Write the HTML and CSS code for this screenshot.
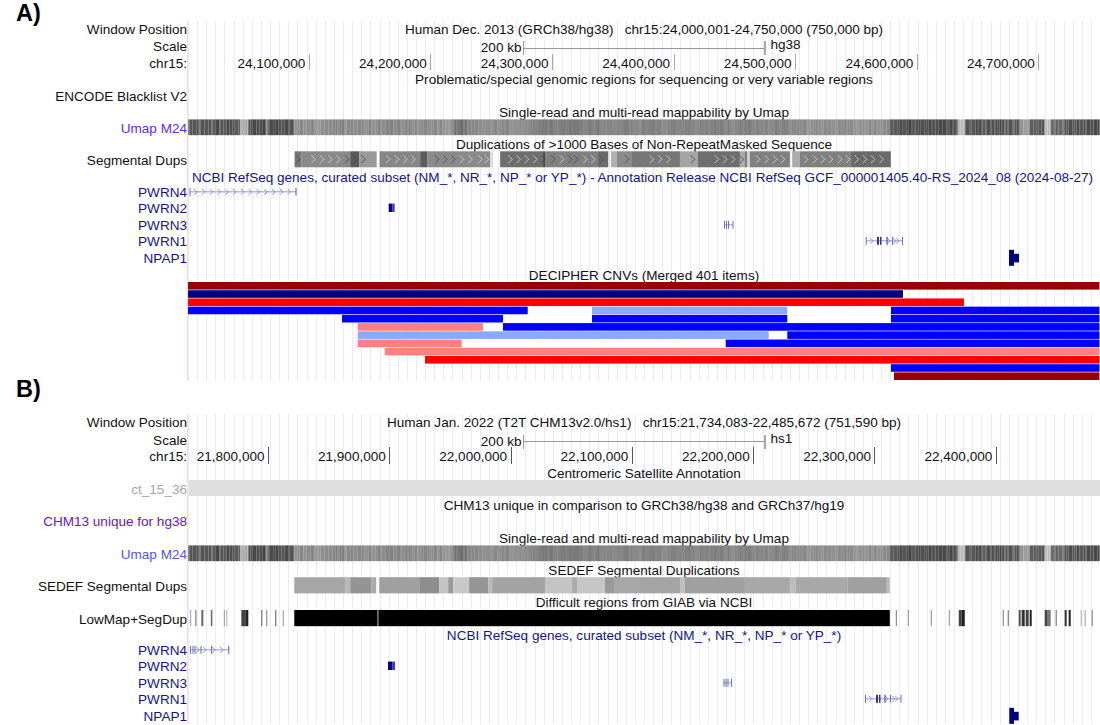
FILE: index.html
```html
<!DOCTYPE html>
<html lang="en">
<head>
<meta charset="utf-8">
<title>UCSC Genome Browser comparison</title>
<link rel="stylesheet" href="styles.css">
</head>
<body>
<main class="figure">
  <h2 class="panel-heading heading-a">A)</h2>
  <section class="browser">
    <div class="row head"><div class="label">Window Position</div><div class="track center pos">Human Dec. 2013 (GRCh38/hg38)   chr15:24,000,001-24,750,000 (750,000 bp)</div></div>
    <div class="row head"><div class="label">Scale</div><div class="track scale"><span class="scale-left">200 kb</span><span class="scale-bar"></span><span class="scale-right">hg38</span></div></div>
    <div class="row head"><div class="label">chr15:</div><div class="track ruler ruler-a">
      <span class="mark">24,100,000</span><span class="mark">24,200,000</span><span class="mark">24,300,000</span><span class="mark">24,400,000</span><span class="mark">24,500,000</span><span class="mark">24,600,000</span><span class="mark">24,700,000</span>
    </div></div>
    <div class="row"><div class="label"></div><div class="track center">Problematic/special genomic regions for sequencing or very variable regions</div></div>
    <div class="row"><div class="label">ENCODE Blacklist V2</div><div class="track"></div></div>
    <div class="row"><div class="label"></div><div class="track center">Single-read and multi-read mappability by Umap</div></div>
    <div class="row"><div class="label umap-a">Umap M24</div><div class="track" data-draw="umap"></div></div>
    <div class="row"><div class="label"></div><div class="track center">Duplications of &gt;1000 Bases of Non-RepeatMasked Sequence</div></div>
    <div class="row"><div class="label">Segmental Dups</div><div class="track" data-draw="segdups"></div></div>
    <div class="row"><div class="label"></div><div class="track center navy refseq">NCBI RefSeq genes, curated subset (NM_*, NR_*, NP_* or YP_*) - Annotation Release NCBI RefSeq GCF_000001405.40-RS_2024_08 (2024-08-27)</div></div>
    <div class="row gene"><div class="label navy">PWRN4</div><div class="track" data-draw="a-pwrn4"></div></div>
    <div class="row gene"><div class="label navy">PWRN2</div><div class="track" data-draw="a-pwrn2"></div></div>
    <div class="row gene"><div class="label navy">PWRN3</div><div class="track" data-draw="a-pwrn3"></div></div>
    <div class="row gene"><div class="label navy">PWRN1</div><div class="track" data-draw="a-pwrn1"></div></div>
    <div class="row gene"><div class="label navy">NPAP1</div><div class="track" data-draw="a-npap1"></div></div>
    <div class="row"><div class="label"></div><div class="track center">DECIPHER CNVs (Merged 401 items)</div></div>
    <div class="row decipher"><div class="label"></div><div class="track" data-draw="decipher"></div></div>
  </section>

  <h2 class="panel-heading heading-b">B)</h2>
  <section class="browser">
    <div class="row head"><div class="label">Window Position</div><div class="track center pos">Human Jan. 2022 (T2T CHM13v2.0/hs1)   chr15:21,734,083-22,485,672 (751,590 bp)</div></div>
    <div class="row head"><div class="label">Scale</div><div class="track scale"><span class="scale-left">200 kb</span><span class="scale-bar"></span><span class="scale-right">hs1</span></div></div>
    <div class="row head"><div class="label">chr15:</div><div class="track ruler ruler-b">
      <span class="mark">21,800,000</span><span class="mark">21,900,000</span><span class="mark">22,000,000</span><span class="mark">22,100,000</span><span class="mark">22,200,000</span><span class="mark">22,300,000</span><span class="mark">22,400,000</span>
    </div></div>
    <div class="row"><div class="label"></div><div class="track center">Centromeric Satellite Annotation</div></div>
    <div class="row"><div class="label muted">ct_15_36</div><div class="track"><div class="satellite"></div></div></div>
    <div class="row"><div class="label"></div><div class="track center">CHM13 unique in comparison to GRCh38/hg38 and GRCh37/hg19</div></div>
    <div class="row"><div class="label violet">CHM13 unique for hg38</div><div class="track"></div></div>
    <div class="row"><div class="label"></div><div class="track center">Single-read and multi-read mappability by Umap</div></div>
    <div class="row"><div class="label umap-b">Umap M24</div><div class="track" data-draw="umap"></div></div>
    <div class="row"><div class="label"></div><div class="track center">SEDEF Segmental Duplications</div></div>
    <div class="row"><div class="label">SEDEF Segmental Dups</div><div class="track" data-draw="sedef"></div></div>
    <div class="row"><div class="label"></div><div class="track center">Difficult regions from GIAB via NCBI</div></div>
    <div class="row"><div class="label">LowMap+SegDup</div><div class="track" data-draw="lowmap"></div></div>
    <div class="row"><div class="label"></div><div class="track center navy">NCBI RefSeq genes, curated subset (NM_*, NR_*, NP_* or YP_*)</div></div>
    <div class="row gene"><div class="label navy">PWRN4</div><div class="track" data-draw="b-pwrn4"></div></div>
    <div class="row gene"><div class="label navy">PWRN2</div><div class="track" data-draw="b-pwrn2"></div></div>
    <div class="row gene"><div class="label navy">PWRN3</div><div class="track" data-draw="b-pwrn3"></div></div>
    <div class="row gene"><div class="label navy">PWRN1</div><div class="track" data-draw="b-pwrn1"></div></div>
    <div class="row gene"><div class="label navy">NPAP1</div><div class="track" data-draw="b-npap1"></div></div>
  </section>
</main>
<script src="tracks.js"></script>
</body>
</html>
```
FILE: styles.css
```css
* { box-sizing: border-box; }
html, body { margin: 0; padding: 0; background: #fff; }
body {
  width: 1100px;
  height: 725px;
  overflow: hidden;
  font-family: "Liberation Sans", Arial, sans-serif;
  font-size: 13.55px;
  color: #111;
}
.panel-heading {
  margin: 0;
  padding-left: 16px;
  font-size: 23.5px;
  font-weight: 700;
  color: #000;
}
.heading-a { height: 21px; line-height: 27px; }
.heading-b { height: 33.9px; line-height: 17px; }
.browser {
  background-image:
    linear-gradient(#ffd9d9, #ffd9d9),
    repeating-linear-gradient(90deg, #e9e9ff 0 1px, transparent 1px 9.12px);
  background-repeat: no-repeat;
  background-position: 187px 0, 188px 0;
  background-size: 1px 100%, 912px 100%;
}
.row {
  display: grid;
  grid-template-columns: 188px 912px;
  height: 16.2px;
  line-height: 20px;
  white-space: nowrap;
}
.row.head { height: 16.47px; line-height: 18.5px; }
.row.head + .row.head { line-height: 20px; }
.row.gene { height: 16.5px; line-height: 18.5px; }
.row.decipher { height: 98.2px; }
.label { text-align: right; padding-right: 1px; }
.track { min-width: 0; }
.track svg { display: block; overflow: visible; filter: blur(0.3px); }
.center { text-align: center; }
.pos { white-space: pre; }
.refseq { padding-right: 3px; }
.navy { color: #14148a; }
.muted { color: #a8a8a8; }
.violet { color: #6a12d8; }
.umap-a { color: #5a2cf5; }
.umap-b { color: #5252f5; }
.satellite { height: 16.2px; margin-left: 1px; background: #dedede; }
.scale {
  display: grid;
  grid-template-columns: 1fr 243px 1fr;
  align-items: center;
  padding-top: 1px;
}
.scale-left { text-align: right; padding-right: 1px; }
.scale-right { padding-left: 5px; position: relative; top: -3px; }
.scale-bar {
  height: 14px;
  border-left: 1px solid #999;
  border-right: 2px solid #aaa;
  background: linear-gradient(#999, #999) 0 50% / 100% 1px no-repeat;
}
.ruler { display: flex; }
.mark {
  flex: none;
  height: 16.47px;
  text-align: right;
  padding-right: 3.5px;
  border-right: 1px solid #aaa;
}
.ruler-a { padding-left: 0.2px; }
.ruler-a .mark { width: 121.6px; }
.ruler-b .mark { width: 121.3px; border-right-color: #555; }
.ruler-b .mark:first-child { width: 81px; }
```
FILE: tracks.js
```js
var NS = "http://www.w3.org/2000/svg";
var RED = "#960000", NAVY = "#000080", BRIGHT = "#ff0000", BLUE = "#0000ff", SKY = "#88aaff", PINK = "#ff8080";

function svg(h) {
  var s = document.createElementNS(NS, "svg");
  s.setAttribute("width", 912);
  s.setAttribute("height", h);
  s.setAttribute("viewBox", "188 0 912 " + h);
  return s;
}
function rect(s, x0, x1, y, h, fill) {
  var r = document.createElementNS(NS, "rect");
  r.setAttribute("x", x0);
  r.setAttribute("y", y);
  r.setAttribute("width", x1 - x0);
  r.setAttribute("height", h);
  r.setAttribute("fill", fill);
  s.appendChild(r);
}
function chevron(s, x, c, w, h, stroke, sw) {
  var p = document.createElementNS(NS, "polyline");
  p.setAttribute("points", (x - w) + "," + (c - h) + " " + x + "," + c + " " + (x - w) + "," + (c + h));
  p.setAttribute("fill", "none");
  p.setAttribute("stroke", stroke);
  p.setAttribute("stroke-width", sw);
  s.appendChild(p);
}
function grey(v) {
  v = Math.max(0, Math.min(255, Math.round(v)));
  return "rgb(" + v + "," + v + "," + v + ")";
}

/* Umap: mean grey per stretch of the window, with column noise */
var UMAP = [
  [188, 240, 84, 26], [240, 248, 170, 24], [248, 266, 72, 24], [266, 268, 130, 10], [268, 294, 74, 24],
  [294, 335, 142, 18], [335, 345, 132, 18], [345, 380, 140, 18], [380, 420, 136, 18], [420, 453, 142, 18],
  [453, 467, 112, 10], [467, 490, 140, 18], [490, 530, 140, 16], [530, 600, 126, 16], [600, 700, 134, 16],
  [700, 800, 132, 16], [800, 890, 142, 18], [890, 958, 80, 26], [958, 965, 190, 14], [965, 1020, 84, 26],
  [1020, 1030, 150, 16], [1030, 1045, 84, 24], [1045, 1051, 185, 10], [1051, 1065, 100, 24], [1065, 1100, 78, 24]
];
function umap() {
  var s = svg(16.2), seed = 71;
  function rnd() { seed = (seed * 16807) % 2147483647; return seed / 2147483647; }
  UMAP.forEach(function (z) {
    var x = z[0];
    while (x < z[1]) {
      var w = Math.min(1 + Math.floor(rnd() * 4), z[1] - x);
      rect(s, x, x + w, 0.4, 15.8, grey(z[2] + (rnd() - 0.5) * z[3]));
      x += w;
    }
  });
  return s;
}

var SEG = [
  [294.3, 301, "#777"], [301, 350, "#8a8a8a"], [350, 359, "#595959"], [359, 376.5, "#999"],
  [379.3, 420, "#868686"], [420, 427, "#5c5c5c"], [427, 490, "#8a8a8a"], [490, 493, "#ddd"],
  [500, 543, "#6e6e6e"], [543, 545, "#4a4a4a"], [545, 598, "#808080"], [598, 608, "#6a6a6a"], [608, 610, "#ddd"],
  [611, 617, "#b0b0b0"], [617, 632, "#8a8a8a"], [632, 680, "#787878"], [680, 698, "#a4a4a4"],
  [698, 740, "#6e6e6e"], [740, 745, "#aaa"], [745, 747, "#777"], [747, 750, "#ccc"], [750, 790, "#808080"],
  [792.3, 800, "#aaa"], [800, 851, "#808080"], [851, 891, "#6a6a6a"]
];
var CHEV_LIGHT = [313, 321.7, 330, 338, 388, 396.7, 405, 413, 461.7, 470, 480, 486.7, 510, 518.3, 526.7, 535,
  561.7, 585, 593, 651.7, 660, 668.3, 716.7, 725, 733, 758, 766.7, 775, 783, 806, 815, 823, 831, 840, 848, 856.7, 865, 873, 881.7];
var CHEV_DARK = [297.7, 346.7, 355, 363, 436.7, 445, 453, 543.3, 553, 570, 576, 601.7, 626.7, 692.7, 741.7];
function segdups() {
  var s = svg(16.2);
  SEG.forEach(function (b) { rect(s, b[0], b[1], 0.3, 16, b[2]); });
  CHEV_LIGHT.forEach(function (x) { chevron(s, x + 2, 8.3, 4, 4, "#d8d8d8", 0.8); });
  CHEV_DARK.forEach(function (x) { chevron(s, x + 2, 8.3, 4, 4, "#444", 0.8); });
  return s;
}

var SEDEF = [
  [294, 345, "#a6a6a6"], [345, 350, "#b8b8b8"], [350, 371, "#949494"], [371, 376, "#aaa"],
  [379, 419, "#a0a0a0"], [419, 439, "#8e8e8e"], [439, 448, "#c4c4c4"], [448, 453, "#999"], [453, 469, "#c8c8c8"],
  [469, 488, "#959595"], [488, 492, "#bbb"], [492, 545, "#a3a3a3"], [545, 572, "#c4c4c4"], [572, 577, "#aaa"],
  [577, 605, "#c6c6c6"], [605, 614, "#999"], [614, 640, "#a8a8a8"], [640, 680, "#a4a4a4"], [680, 685, "#c0c0c0"],
  [685, 745, "#a0a0a0"], [745, 790, "#a8a8a8"], [790, 796, "#bdbdbd"], [796, 848, "#a8a8a8"], [848, 887, "#a0a0a0"], [887, 890, "#bbb"]
];
function sedef() {
  var s = svg(16.2);
  SEDEF.forEach(function (b) { rect(s, b[0], b[1], 0.2, 16.2, b[2]); });
  return s;
}

var LOW = [
  [190, 190.8, "#888"], [195, 196, "#666"], [201, 203, "#666"], [210.5, 212, "#666"], [223.5, 224.5, "#999"], [226, 227, "#aaa"],
  [241, 245, "#444"], [245, 248, "#222"], [261, 262, "#555"], [266, 267, "#777"], [275, 276, "#555"], [282.5, 283.5, "#999"],
  [294, 377, "#000"], [377, 378.3, "#555"], [378.3, 890, "#000"],
  [896, 897, "#777"], [908, 909, "#888"], [931, 932, "#888"], [949, 950, "#888"], [959, 962, "#444"], [962, 965, "#222"],
  [1003, 1004, "#777"], [1008, 1009, "#666"], [1019, 1021, "#555"], [1022, 1025, "#333"], [1026, 1029, "#444"], [1030, 1032, "#222"],
  [1045, 1048, "#444"], [1048, 1051, "#777"], [1056, 1057, "#666"], [1065, 1067, "#333"], [1069, 1071, "#222"],
  [1081, 1082, "#aaa"], [1085, 1086, "#999"], [1092, 1093, "#777"]
];
function lowmap() {
  var s = svg(16.2);
  LOW.forEach(function (b) { rect(s, b[0], b[1], 0, 16.2, b[2]); });
  return s;
}

function gene(x0, x1, ticks, chevs, solids) {
  return function () {
    var s = svg(16.5), c = 7.8, thin = "#8a8acb";
    if (x1 > x0) rect(s, x0, x1, c - 0.4, 0.9, thin);
    (chevs || []).forEach(function (x) { chevron(s, x, c, 3, 3, thin, 0.9); });
    (ticks || []).forEach(function (t) { rect(s, t[0], t[0] + (t[1] || 1), c - 4, 8, t[2] || "#6f6fbb"); });
    (solids || []).forEach(function (b) { rect(s, b[0], b[1], c + b[2], b[3], b[4] || NAVY); });
    return s;
  };
}
function range(a, b, step) { var r = []; for (var x = a; x < b; x += step) r.push(x); return r; }

var DRAW = {
  umap: umap, segdups: segdups, sedef: sedef, lowmap: lowmap,
  "a-pwrn4": gene(190, 296, [[189.5], [295.5, 1, "#5a5aa8"]], range(197, 293, 7.8)),
  "a-pwrn2": gene(0, 0, [], [], [[388.7, 392.2, -4.2, 8.4], [392.2, 394.6, -4.2, 8.4, "#3a3aa0"]]),
  "a-pwrn3": gene(724, 733, [[724], [726], [728], [732.5]]),
  "a-pwrn1": gene(866, 903, [[865.7], [877, 2, "#34349a"], [880, 1.5, "#34349a"], [886.5, 1, "#34349a"], [892], [902]], [873, 890, 899, 896]),
  "a-npap1": gene(0, 0, [], [], [[1009, 1014, -8, 16], [1014, 1019, -4, 8.6]]),
  "b-pwrn4": gene(190, 229, [[190], [192.5], [194.5], [200.5], [211], [228.3, 1, "#5a5aa8"]], [199, 206, 215, 223]),
  "b-pwrn2": gene(0, 0, [], [], [[388, 392.6, -4.2, 8.4], [392.6, 395, -4.2, 8.4, "#3a3aa0"]]),
  "b-pwrn3": gene(723.5, 731.7, [[723.5], [725.5], [727.5], [731]]),
  "b-pwrn1": gene(865, 901, [[865], [876, 2, "#34349a"], [879, 1.5, "#34349a"], [884.5, 1, "#34349a"], [890], [900.5]], [872, 888, 898, 895]),
  "b-npap1": gene(0, 0, [], [], [[1009.3, 1014, -8, 16], [1014, 1018.7, -4, 8.6]]),
  decipher: function () {
    var rows = [
      [[188, 1099.5, RED]],
      [[188, 903, NAVY]],
      [[188, 964, BRIGHT]],
      [[188, 527.7, BLUE], [592, 787.3, SKY], [891, 1099.5, BLUE]],
      [[342, 503, BLUE], [592, 787.3, BLUE], [891, 1099.5, BLUE]],
      [[357.7, 483, PINK], [503, 1099.5, BLUE]],
      [[357.7, 768.7, SKY], [787.3, 1099.5, BLUE]],
      [[357.7, 461.7, PINK], [725.7, 1099.5, BLUE]],
      [[384.7, 1099.5, PINK]],
      [[425, 1099.5, BRIGHT]],
      [[891, 1099.5, BLUE]],
      [[894, 1099.5, RED]]
    ];
    var blanks = [[3, 527.7, 592], [3, 787.3, 891], [4, 503, 592], [4, 787.3, 891], [5, 483, 503], [6, 768.7, 787.3], [7, 461.7, 725.7]];
    var s = svg(98.2), top = 0, pitch = 8.22;
    blanks.forEach(function (b) { rect(s, b[1], b[2], top + b[0] * pitch, pitch, "#fff"); });
    rows.forEach(function (r, i) {
      r.forEach(function (b) { rect(s, b[0], b[1], top + i * pitch, 7.6, b[2]); });
    });
    return s;
  }
};

document.querySelectorAll("[data-draw]").forEach(function (el) {
  el.appendChild(DRAW[el.getAttribute("data-draw")]());
});
```
